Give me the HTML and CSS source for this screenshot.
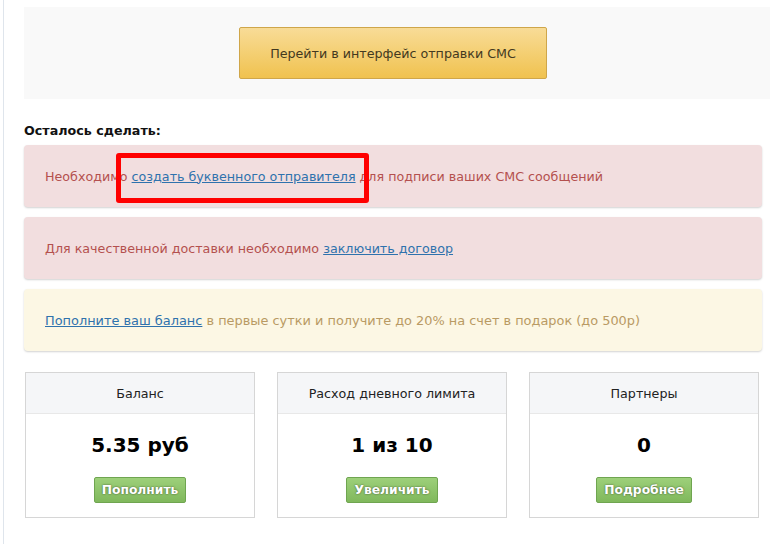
FILE: index.html
```html
<!DOCTYPE html>
<html>
	<head>
		<meta charset="utf-8">
		<link rel="stylesheet" href="styles.css">
	</head>
	<body>
		<div class="page">
			<div class="top-panel">
				<a class="sms-button" href="#">Перейти в интерфейс отправки СМС</a>
			</div>

			<h3 class="todo-title">Осталось сделать:</h3>

			<div class="alert alert-error">
				<span>Необходимо <a href="#">создать буквенного отправителя</a> для подписи ваших СМС сообщений</span>
			</div>
			<div class="alert alert-error">
				<span>Для качественной доставки необходимо <a href="#">заключить договор</a></span>
			</div>
			<div class="alert alert-warning">
				<span><a href="#">Пополните ваш баланс</a> в первые сутки и получите до 20% на счет в подарок (до 500р)</span>
			</div>

			<div class="stats">
				<div class="stat-card">
					<div class="stat-head">Баланс</div>
					<div class="stat-body">
						<div class="stat-value">5.35 руб</div>
						<a class="green-button" href="#">Пополнить</a>
					</div>
				</div>
				<div class="stat-card">
					<div class="stat-head">Расход дневного лимита</div>
					<div class="stat-body">
						<div class="stat-value">1 из 10</div>
						<a class="green-button" href="#">Увеличить</a>
					</div>
				</div>
				<div class="stat-card">
					<div class="stat-head">Партнеры</div>
					<div class="stat-body">
						<div class="stat-value">0</div>
						<a class="green-button" href="#">Подробнее</a>
					</div>
				</div>
			</div>

			<div class="highlight"></div>
		</div>
	</body>
</html>
```

FILE: styles.css
```css
body {
	margin: 0;
	font-family: "DejaVu Sans", Verdana, sans-serif;
	font-size: 12.7px;
	color: #333;
	background: #fff;
}

a {
	color: #2f72ad;
}

.page {
	position: relative;
	margin-left: 3px;
	border-left: 1px solid #dfe5ec;
	padding: 7px 0 0 20px;
	height: 537px;
}

.top-panel {
	width: 746px;
	height: 92px;
	background-color: #f9f9f9;
	display: flex;
	align-items: center;
	justify-content: center;
	padding-right: 8px;
	box-sizing: border-box;
}

.sms-button {
	display: flex;
	align-items: center;
	justify-content: center;
	width: 308px;
	height: 52px;
	box-sizing: border-box;
	border: 1px solid #cfa64a;
	border-radius: 2px;
	background: linear-gradient(#f8dc97, #f0c24f);
	color: #43391f;
	text-decoration: none;
}

.todo-title {
	margin: 24px 0 6px 0;
	font-size: 12.7px;
	line-height: 16px;
	font-weight: bold;
	color: #111;
}

.alert {
	width: 738px;
	height: 62px;
	box-sizing: border-box;
	padding-left: 21px;
	margin-bottom: 10px;
	display: flex;
	align-items: center;
	border-radius: 4px;
	box-shadow: 0 1px 2px rgba(0, 0, 0, 0.18);
}

.alert-error {
	background-color: #f2dedf;
	color: #b4504e;
}

.alert-warning {
	background-color: #fcf7e4;
	color: #b99a63;
	font-size: 12.9px;
}

.stats {
	display: flex;
	gap: 22px;
	margin: 21px 0 0 1px;
}

.stat-card {
	width: 230px;
	height: 146px;
	box-sizing: border-box;
	border: 1px solid #d6d6d6;
}

.stat-head {
	height: 40px;
	background-color: #f5f6f8;
	border-bottom: 1px solid #e8e8e8;
	display: flex;
	align-items: center;
	justify-content: center;
	color: #222;
}

.stat-body {
	display: flex;
	flex-direction: column;
	align-items: center;
	padding-top: 19px;
}

.stat-value {
	font-size: 20px;
	line-height: 24px;
	font-weight: bold;
	color: #000;
	margin-bottom: 20px;
}

.green-button {
	display: flex;
	align-items: center;
	height: 26px;
	box-sizing: border-box;
	padding: 0 7px;
	border: 1px solid #6fa550;
	border-radius: 2px;
	background: linear-gradient(#9dd07a, #80b85c);
	color: #fff;
	font-size: 12.3px;
	font-weight: bold;
	text-decoration: none;
	text-shadow: 0 0 2px rgba(0, 0, 0, 0.6);
}

.highlight {
	position: absolute;
	left: 112px;
	top: 153px;
	width: 253px;
	height: 50px;
	box-sizing: border-box;
	border: 5px solid #ff0000;
	border-radius: 3px;
}
```
